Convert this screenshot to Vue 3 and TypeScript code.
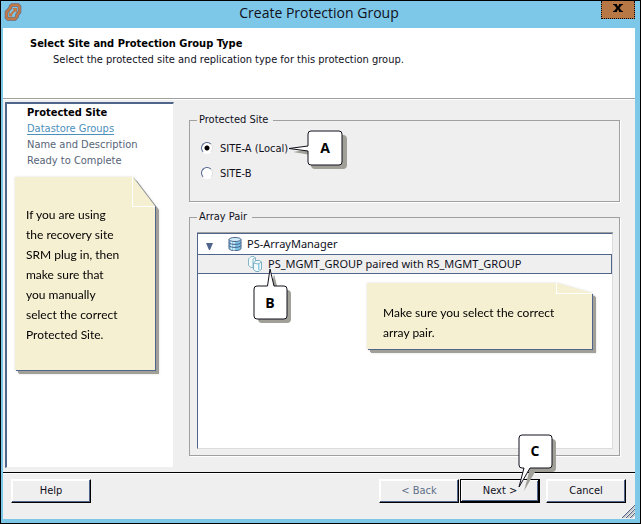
<script setup lang="ts">
import { ref } from 'vue'

interface Site {
  id: string
  label: string
}

interface Step {
  label: string
  state: 'current' | 'link' | 'pending'
}

const sites: Site[] = [
  { id: 'site-a', label: 'SITE-A (Local)' },
  { id: 'site-b', label: 'SITE-B' },
]

const steps: Step[] = [
  { label: 'Protected Site', state: 'current' },
  { label: 'Datastore Groups', state: 'link' },
  { label: 'Name and Description', state: 'pending' },
  { label: 'Ready to Complete', state: 'pending' },
]

const selectedSite = ref('site-a')
</script>

<template>
  <div class="window">
    <header class="titlebar">
      <svg class="logo" viewBox="0 0 18 18" aria-hidden="true">
        <path d="M6.500 4.500V3.500l1.500-1.500h6l1.500 1.500V9L13 12v1.500L11 16H4l-1.500-1.500V9L5 6.500z" fill="none" stroke="#5f6684" stroke-width="3.600" />
        <path d="M6.500 4.500V3.500l1.500-1.500h6l1.500 1.500V9L13 12v1.500L11 16H4l-1.500-1.500V9L5 6.500z" fill="none" stroke="#c07a48" stroke-width="2.400" />
        <path d="M6 12.500L11 7" fill="none" stroke="#c07a48" stroke-width="2" />
        <path d="M8 5h5v5z" fill="#c07a48" />
        <path d="M5 9v4.500h4z" fill="#c07a48" />
      </svg>
      <h1 class="title">Create Protection Group</h1>
      <button class="close" type="button" aria-label="Close">
        <svg viewBox="0 0 10 8" aria-hidden="true">
          <path d="M0 0h4v1L5 2.500 6 1V0h4v1H9L6.500 4 9 7h1v1H6V7L5 5.500 4 7v1H0V7h1L3.500 4 1 1H0z" fill="#000" />
        </svg>
      </button>
    </header>

    <section class="banner">
      <h2>Select Site and Protection Group Type</h2>
      <p>Select the protected site and replication type for this protection group.</p>
    </section>

    <main class="body">
      <nav class="sidebar">
        <ol class="steps">
          <li v-for="step in steps" :key="step.label" :class="step.state">
            <a v-if="step.state === 'link'" href="#">{{ step.label }}</a>
            <template v-else>{{ step.label }}</template>
          </li>
        </ol>
        <aside class="note note-tall">
          <div class="paper">
            If you are using<br />the recovery site<br />SRM plug in, then<br />make sure that<br />you manually<br />select
            the correct<br />Protected Site.
          </div>
        </aside>
      </nav>

      <div class="content">
        <fieldset class="group sites">
          <legend>Protected Site</legend>
          <div v-for="site in sites" :key="site.id" class="choice">
            <input :id="site.id" v-model="selectedSite" type="radio" name="site" :value="site.id" />
            <label :for="site.id">{{ site.label }}</label>
            <span v-if="site.id === 'site-a'" class="callout callout-a">
              <svg viewBox="0 0 62 42" aria-hidden="true">
                <g class="shade" transform="translate(4 4)">
                  <path d="M23 1h28q4 0 4 4v26q0 4-4 4H23q-4 0-4-4V21L1 18l18-3V5q0-4 4-4z" />
                </g>
                <path class="bubble" d="M23 1h28q3 0 3 3v28q0 3-3 3H23q-3 0-3-3V21L1 18.500 20 16V4q0-3 3-3z" />
              </svg>
              <b>A</b>
            </span>
          </div>
        </fieldset>

        <fieldset class="group arrays">
          <legend>Array Pair</legend>
          <div class="tree">
            <div class="row">
              <svg class="arrow" viewBox="0 0 7 7" aria-hidden="true"><path d="M0 0h7L4 7H3z" fill="#50658c" /></svg>
              <svg class="disk" viewBox="0 0 14 14" aria-hidden="true">
                <path d="M1 2.500v9C1 14.300 13 14.300 13 11.500v-9z" fill="#7fc4e4" stroke="#50658c" />
                <path d="M3.500 4v8.500M6 5v8.500" stroke="#e6f6fc" stroke-width="1.500" />
                <ellipse cx="7" cy="2.500" rx="6" ry="2" fill="#d2eefa" stroke="#50658c" />
                <path d="M1 5.500c1 2.500 11 2.500 12 0M1 8.500c1 2.500 11 2.500 12 0" fill="none" stroke="#41618c" />
              </svg>
              <span>PS-ArrayManager</span>
            </div>
            <div class="row selected">
              <svg class="pair" viewBox="0 0 14 16" aria-hidden="true">
                <path d="M.5 3L3 .5h3L7.500 2v7L5 11.500H3L.5 9.500z" fill="#f2fafc" stroke="#86b6c8" />
                <path d="M5 3v8M5 3l2.500-1.500" stroke="#86b6c8" />
                <path d="M5.500 7L8 4.500h3.500l2 1.500v7L11 15.500H8l-2.500-2z" fill="#f2fafc" stroke="#78aec6" />
                <path d="M10 7.500h1.500V14H10z" fill="#8ccbe4" />
                <path d="M5.500 7l4.500 1 3.500-2" fill="none" stroke="#86b6c8" />
              </svg>
              <span>PS_MGMT_GROUP paired with RS_MGMT_GROUP</span>
              <span class="callout callout-b">
                <svg viewBox="0 0 42 58" aria-hidden="true">
                  <g class="shade" transform="translate(4 4)">
                    <path d="M4 18h10l3-16 4 16h9q4 0 4 4v25q0 4-4 4H5q-4 0-4-4V22q0-4 3-4z" />
                  </g>
                  <path class="bubble" d="M4 18h10.500L17 1l4 17h10q3 0 3 3v27q0 3-3 3H4q-3 0-3-3V21q0-3 3-3z" />
                </svg>
                <b>B</b>
              </span>
            </div>
            <aside class="note note-wide">
              <div class="paper">Make sure you select the correct<br />array pair.</div>
            </aside>
          </div>
        </fieldset>
      </div>
    </main>

    <footer class="actions">
      <button type="button">Help</button>
      <span class="spacer"></span>
      <button type="button" class="muted">&lt; Back</button>
      <span class="next">
        <button type="button" class="default">Next &gt;</button>
        <span class="callout callout-c">
          <svg viewBox="0 0 42 58" aria-hidden="true">
            <g class="shade" transform="translate(4 4)">
              <path d="M5 1h25q4 0 4 4v25q0 4-4 4H13L2 53 7 34H5q-4 0-4-4V5q0-4 4-4z" />
            </g>
            <path class="bubble" d="M4 1h27q3 0 3 3v27q0 3-3 3H12L1 53 6 34H4q-3 0-3-3V4q0-3 3-3z" />
          </svg>
          <b>C</b>
        </span>
      </span>
      <button type="button" class="cancel">Cancel</button>
      <svg class="grip" viewBox="0 0 13 13" aria-hidden="true">
        <path d="M0 13L13 0M4 13l9-9M8 13l5-5" stroke="#50658c" />
        <path d="M1.500 13L13 1.500M5.500 13L13 5.500M9.500 13L13 9.500" stroke="#a0a0a0" />
      </svg>
    </footer>
  </div>
</template>

<style>
body {
  margin: 0;
}
</style>

<style scoped>
* {
  box-sizing: border-box;
}

.window {
  display: flex;
  flex-direction: column;
  min-height: 100vh;
  border: 1px solid #000;
  background: #7dc7e8;
  padding: 0 5px 4px 2px;
  font-family: 'DejaVu Sans Condensed', 'DejaVu Sans', sans-serif;
  font-size: 11px;
  line-height: 16px;
  color: #10101c;
}

.titlebar {
  display: grid;
  grid-template-columns: 34px 1fr 34px;
  height: 27px;
}

.logo {
  width: 18px;
  height: 18px;
  margin: 2px 0 0 1px;
}

.title {
  margin: 0;
  text-align: center;
  font: 400 14px/24px 'Open Sans', sans-serif;
}

.close {
  display: grid;
  place-items: center;
  height: 18px;
  padding: 0 0 3px;
  border: 1px dotted #000;
  border-top: 0;
  background: #b87846;
}

.close svg {
  width: 10px;
  height: 8px;
}

.banner {
  height: 72px;
  padding: 8px 27px;
  background: #fff;
  border-bottom: 1px solid #fff;
  box-shadow: inset 0 -1px #a0a0a0;
}

.banner h2 {
  margin: 0;
  font-size: 11px;
  font-weight: 700;
  color: #000;
}

.banner p {
  margin: 0 0 0 23px;
}

.body {
  display: flex;
  flex: 1;
  gap: 15px;
  padding: 2px 15px 4px 2px;
  background: #efefef;
}

.sidebar {
  flex: 0 0 169px;
  background: #fff;
  border: 1px solid #efefef;
  border-width: 2px 1px 1px 2px;
  border-color: #50658c #efefef #efefef #50658c;
}

.steps {
  margin: 0;
  padding: 1px 0 0 20px;
  list-style: none;
  color: #566478;
}

.steps .current {
  font-weight: 700;
  color: #000;
}

.steps a {
  color: #4c8fbc;
  text-decoration: underline;
  text-underline-offset: 2px;
}

.note {
  filter: drop-shadow(1px 1px 0 #50658c) drop-shadow(3px 3px 0 #a0a098) drop-shadow(0 0 1px #dcdcdc);
  font: 400 12px/20px Lato, sans-serif;
  color: #000;
}

.paper {
  position: relative;
  background: #f6f0d2;
}

.paper::after {
  content: '';
  position: absolute;
  top: 0;
  right: 0;
  border: solid #fff;
  border-width: 0 0 1px 1px;
}

.note-tall {
  width: 140px;
  margin: 8px 0 0 8px;
}

.note-tall .paper {
  min-height: 193px;
  padding: 28px 0 0 11px;
  clip-path: polygon(0 0, 118px 0, 100% 29px, 100% 100%, 0 100%);
}

.note-tall .paper::after {
  width: 22px;
  height: 29px;
}

.note-wide {
  width: 225px;
  margin: 9px 20px 0 auto;
}

.note-wide .paper {
  min-height: 66px;
  padding: 20px 0 0 16px;
  clip-path: polygon(0 0, 190px 0, 100% 10px, 100% 100%, 0 100%);
}

.note-wide .paper::after {
  width: 35px;
  height: 10px;
}

.content {
  display: flex;
  flex: 1;
  flex-direction: column;
  gap: 7px;
  min-width: 0;
  padding: 10px 0 12px;
}

.group {
  min-width: 0;
  margin: 0;
  padding: 8px 6px 6px 7px;
  border: 1px solid #a0a0a0;
  box-shadow: 1px 1px #fff;
}

.group legend {
  padding: 0 5px 0 2px;
}

.sites {
  height: 90px;
}

.choice {
  display: flex;
  align-items: center;
  gap: 7px;
  height: 25px;
  margin-left: 3px;
  position: relative;
}

.choice input {
  appearance: none;
  width: 12px;
  height: 12px;
  margin: 0 0 2px 1px;
  border: 1px solid;
  border-color: #50658c #e0e0e0 #fff #50658c;
  border-radius: 50%;
  background: #fff;
}

.choice input:checked {
  background: radial-gradient(circle, #000 2px, #fff 3px);
}

.arrays {
  display: flex;
  flex: 1;
}

.tree {
  flex: 1;
  min-width: 0;
  min-height: 208px;
  border: 1px solid;
  border-color: #50658c #dcdcdc #dcdcdc #50658c;
  background: #fff;
  box-shadow: 0 -1px #a0a0a0;
  font-family: 'Noto Sans', sans-serif;
}

.row {
  display: flex;
  align-items: center;
  height: 20px;
  padding-left: 8px;
  position: relative;
}

.row.selected {
  padding-left: 50px;
  border: 1px solid #50658c;
  border-left: 0;
  background: #efefef;
}

.arrow {
  width: 7px;
  height: 7px;
  margin-top: 4px;
}

.disk {
  width: 14px;
  height: 14px;
  margin: 0 5px 0 15px;
}

.pair {
  width: 14px;
  height: 16px;
  margin-right: 6px;
}

.callout {
  position: absolute;
  z-index: 1;
}

.callout svg {
  display: block;
  width: 100%;
  height: 100%;
}

.callout b {
  position: absolute;
  width: 34px;
  text-align: center;
  font: 700 14px/34px 'Open Sans', sans-serif;
  color: #000;
}

.shade {
  fill: #a0a098;
}

.bubble {
  fill: #fff;
  stroke: #10101c;
}

.callout-a {
  width: 62px;
  height: 42px;
  left: 88px;
  top: -6px;
}

.callout-a b {
  left: 20px;
  top: 1px;
}

.callout-b {
  width: 42px;
  height: 58px;
  left: 55px;
  top: 13px;
}

.callout-b b {
  left: 0;
  top: 18px;
}

.callout-c {
  width: 42px;
  height: 58px;
  right: -20px;
  bottom: 11px;
}

.callout-c b {
  left: 0;
  top: 0;
}

.actions {
  display: flex;
  align-items: flex-start;
  height: 47px;
  padding: 6px 9px 0 8px;
  border-top: 1px solid #000;
  background: #efefef;
  box-shadow: inset 0 1px #fff;
  position: relative;
}

.actions button {
  width: 80px;
  height: 24px;
  padding: 0;
  border: 1px solid;
  border-color: #fff #000 #000 #fff;
  background: #efefef;
  box-shadow: inset -1px -1px #50658c, inset 1px 1px #fff;
  font: inherit;
  color: inherit;
}

.actions .muted {
  color: #607088;
}

.actions .default {
  border-color: #000;
  box-shadow: inset -1px -1px #000, inset 1px 1px #fff, inset -2px -2px #50658c;
}

.spacer {
  flex: 1;
}

.next {
  position: relative;
  margin: 0 6px 0 1px;
}

.grip {
  position: absolute;
  right: 0;
  bottom: 1px;
  width: 13px;
  height: 13px;
}
</style>
